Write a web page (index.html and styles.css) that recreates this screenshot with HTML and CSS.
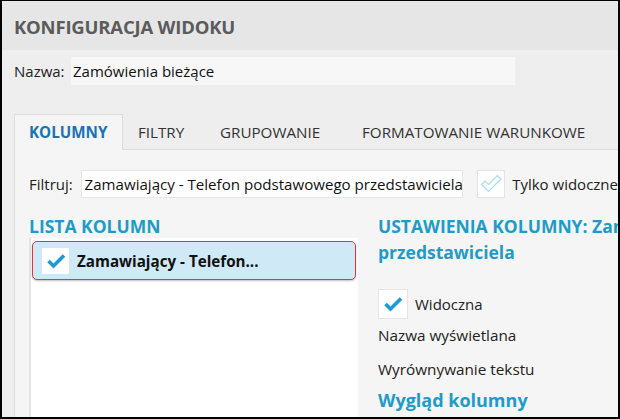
FILE: index.html
```html
<!DOCTYPE html>
<html lang="pl">
<head>
<meta charset="utf-8">
<link rel="stylesheet" href="styles.css">
</head>
<body>
<div class="window">
  <div class="header"><h1 class="title">KONFIGURACJA WIDOKU</h1></div>
  <div class="name-row">
    <span class="label">Nazwa:</span>
    <div class="name-input">Zamówienia bieżące</div>
  </div>
  <div class="tabs">
    <div class="tab tab-active">KOLUMNY</div>
    <div class="tab tab-filtry">FILTRY</div>
    <div class="tab tab-grup">GRUPOWANIE</div>
    <div class="tab tab-format">FORMATOWANIE WARUNKOWE</div>
  </div>
  <div class="panel">
    <div class="filter-row">
      <span class="label">Filtruj:</span>
      <div class="filter-input">Zamawiający - Telefon podstawowego przedstawiciela</div>
      <div class="checkbox cb-filter">
        <svg width="26" height="26" viewBox="0 0 26 26"><path d="M3.5 13.5 L7 10 L10.5 13.5 L19.5 4.5 L23 8 L10.5 20.5 Z" fill="none" stroke="#a9dcf2" stroke-width="1.2" stroke-linejoin="miter"/></svg>
      </div>
      <span class="cb-text">Tylko widoczne</span>
    </div>
    <div class="columns">
      <div class="col-left">
        <h2 class="section">LISTA KOLUMN</h2>
        <div class="list">
          <div class="item selected">
            <div class="checkbox cb-item">
              <svg width="26" height="26" viewBox="0 0 26 26"><path d="M5.5 13 L10.5 18 L21 7.5" fill="none" stroke="#1c9ad6" stroke-width="3.6"/></svg>
            </div>
            <span class="item-text">Zamawiający - Telefon...</span>
          </div>
        </div>
      </div>
      <div class="col-right">
        <h2 class="section settings"><span class="line">USTAWIENIA KOLUMNY: Zamawiający - Telefon podstawowego</span><span class="line">przedstawiciela</span></h2>
        <div class="check-row">
          <div class="checkbox cb-vis">
            <svg width="28" height="28" viewBox="0 0 28 28"><path d="M6.5 14 L11.5 19 L22 8.5" fill="none" stroke="#1c9ad6" stroke-width="3.6"/></svg>
          </div>
          <span class="cb-text">Widoczna</span>
        </div>
        <div class="field field-first">Nazwa wyświetlana</div>
        <div class="field field-second">Wyrównywanie tekstu</div>
        <h3 class="subsection">Wygląd kolumny</h3>
      </div>
    </div>
  </div>
</div>
</body>
</html>
```

FILE: styles.css
```css
html, body {
  margin: 0;
  padding: 0;
}
body {
  width: 620px;
  height: 419px;
  overflow: hidden;
  font-family: "Open Sans", "Noto Sans", sans-serif;
  color: #222;
}
.window {
  box-sizing: border-box;
  width: 620px;
  height: 419px;
  border: 2px solid #000;
  border-top-width: 1px;
  background: #eeeeee;
  overflow: hidden;
  display: flex;
  flex-direction: column;
}
.header {
  height: 49px;
  flex: none;
  background: #e6e6e6;
  display: flex;
  align-items: center;
  padding-left: 12px;
  padding-top: 2px;
  box-sizing: border-box;
}
.title {
  margin: 0;
  font-size: 18.5px;
  font-weight: 700;
  color: #5b5b5b;
  letter-spacing: -0.2px;
}
.name-row {
  display: flex;
  align-items: center;
  margin-top: 7px;
  padding-left: 12px;
  flex: none;
}
.label {
  font-size: 15px;
  color: #222;
}
.name-row .label {
  width: 57px;
}
.name-input {
  width: 444px;
  height: 28px;
  background: #f7f7f7;
  font-size: 15px;
  line-height: 28px;
  padding-left: 2px;
  box-sizing: border-box;
  color: #111;
}
.tabs {
  display: flex;
  margin-top: 29px;
  padding-left: 12px;
  flex: none;
  position: relative;
  z-index: 1;
}
.tab {
  box-sizing: border-box;
  height: 35px;
  padding-left: 15px;
  font-size: 15.2px;
  line-height: 36px;
  color: #333;
  white-space: nowrap;
  flex: none;
}
.tab-active {
  width: 109px;
  background: #f5f5f5;
  border: 1px solid #dcdcdc;
  border-bottom: none;
  height: 36px;
  margin-bottom: -1px;
  padding-left: 14px;
  color: #1a72b6;
  font-weight: 700;
  line-height: 35px;
}
.tab-filtry { width: 82px; }
.tab-grup { width: 142px; }
.panel {
  flex: 1;
  margin-left: 12px;
  background: #f5f5f5;
  border-left: 1px solid #dcdcdc;
  border-top: 1px solid #dcdcdc;
  padding-left: 14px;
  padding-top: 20px;
  display: flex;
  flex-direction: column;
  min-height: 0;
}
.filter-row {
  display: flex;
  align-items: center;
  white-space: nowrap;
  flex: none;
}
.filter-row .label {
  width: 52px;
}
.filter-input {
  box-sizing: border-box;
  width: 386px;
  height: 28px;
  background: #fff;
  border: 1px solid #e6e6e6;
  font-size: 15.1px;
  line-height: 26px;
  padding-left: 3px;
  color: #111;
  overflow: hidden;
}
.checkbox {
  box-sizing: border-box;
  background: #fff;
  border: 1px solid #e4e4e4;
  display: flex;
  align-items: center;
  justify-content: center;
  flex: none;
}
.cb-filter {
  width: 28px;
  height: 28px;
  margin-left: 14px;
}
.cb-text {
  font-size: 15px;
  color: #222;
  margin-left: 7px;
  white-space: nowrap;
}
.columns {
  display: flex;
  flex: 1;
  min-height: 0;
  margin-top: 15px;
}
.col-left {
  width: 329px;
  flex: none;
  display: flex;
  flex-direction: column;
}
.section {
  margin: 0;
  font-size: 17.5px;
  font-weight: 700;
  color: #1f9bc8;
  line-height: 26px;
}
.col-left .section {
  height: 25px;
}
.list {
  flex: 1;
  background: #fff;
  border-left: 2px solid #e4e4e4;
  padding: 3px 2px 0 1px;
}
.item {
  display: flex;
  align-items: center;
  height: 39px;
  box-sizing: border-box;
}
.selected {
  background: #d0e9f6;
  border: 1.5px solid #e8333b;
  border-radius: 5px;
  box-shadow: 0 1px 2px rgba(0,0,0,0.25);
  padding-left: 9px;
}
.cb-item {
  width: 27px;
  height: 26px;
  border: none;
}
.item-text {
  font-size: 15.2px;
  font-weight: 700;
  color: #111;
  margin-left: 8px;
  white-space: nowrap;
}
.col-right {
  flex: 1;
  min-width: 0;
  padding-left: 20px;
  overflow: hidden;
}
.settings {
  height: 52px;
}
.line {
  display: block;
  white-space: nowrap;
}
.check-row {
  display: flex;
  align-items: center;
  margin-top: 24px;
}
.cb-vis {
  width: 30px;
  height: 30px;
}
.field {
  font-size: 15.3px;
  color: #222;
  line-height: 20px;
  white-space: nowrap;
}
.field-first {
  margin-top: 6px;
}
.field-second {
  margin-top: 14px;
}
.subsection {
  margin: 9px 0 0 0;
  font-size: 18px;
  font-weight: 700;
  color: #1f9bc8;
  line-height: 24px;
  white-space: nowrap;
}
```
